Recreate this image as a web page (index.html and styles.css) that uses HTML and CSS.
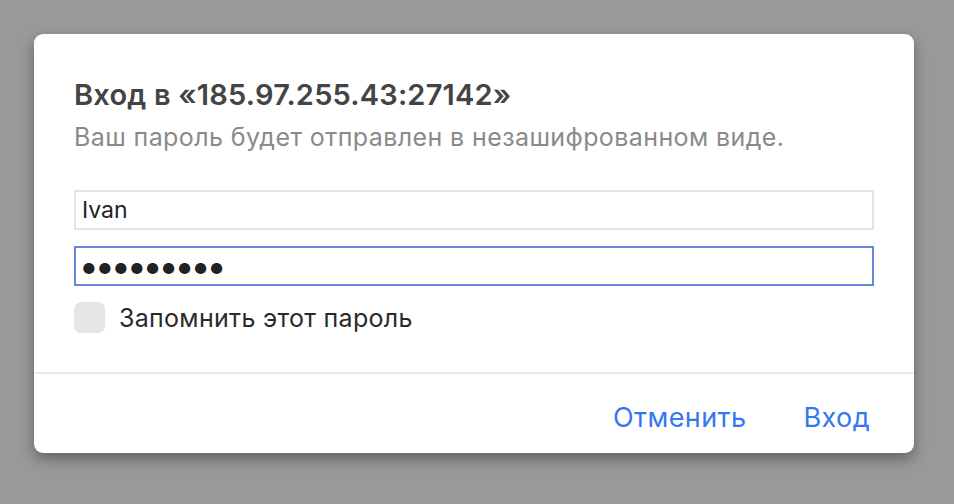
FILE: index.html
```html
<!DOCTYPE html>
<html lang="ru">
<head>
<meta charset="utf-8">
<link rel="stylesheet" href="styles.css">
</head>
<body>
<div class="dialog">
  <div class="content">
    <h1 class="title">Вход в «185.97.255.43:27142»</h1>
    <p class="subtitle">Ваш пароль будет отправлен в незашифрованном виде.</p>
    <div class="field">Ivan</div>
    <div class="field focused"><span class="dots">●●●●●●●●●</span></div>
    <label class="remember"><span class="checkbox"></span><span class="remember-text">Запомнить этот пароль</span></label>
  </div>
  <div class="footer">
    <span class="btn">Отменить</span>
    <span class="btn">Вход</span>
  </div>
</div>
</body>
</html>
```

FILE: styles.css
```css
html, body {
  margin: 0;
  padding: 0;
}
body {
  width: 954px;
  height: 504px;
  background: #999999;
  font-family: Inter, "Liberation Sans", sans-serif;
  overflow: hidden;
}
.dialog {
  margin: 34px 0 0 34px;
  width: 880px;
  height: 419px;
  background: #ffffff;
  border-radius: 9px;
  box-shadow: 0 6px 14px rgba(0, 0, 0, 0.35);
  display: flex;
  flex-direction: column;
}
.content {
  padding: 44px 40px 39px 40px;
  display: flex;
  flex-direction: column;
  border-bottom: 2px solid #ebebeb;
}
.title {
  margin: 0;
  font-size: 29px;
  line-height: 34px;
  font-weight: 600;
  letter-spacing: 0.2px;
  color: #444444;
}
.subtitle {
  margin: 10px 0 0 0;
  font-size: 25px;
  line-height: 30px;
  letter-spacing: 0.4px;
  color: #8a8a8a;
}
.field {
  margin-top: 38px;
  height: 40px;
  box-sizing: border-box;
  border: 2px solid #e2e2e2;
  padding: 0 6px;
  font-size: 23px;
  line-height: 36px;
  color: #222222;
}
.field.focused {
  margin-top: 16px;
  border-color: #6389dc;
}
.dots {
  font-size: 15px;
  letter-spacing: 2.25px;
  color: #222;
}
.remember {
  margin-top: 16px;
  display: flex;
  align-items: center;
  gap: 14px;
}
.checkbox {
  width: 31px;
  height: 31px;
  border-radius: 7px;
  background: #e6e6e6;
}
.remember-text {
  font-size: 25px;
  letter-spacing: 0.3px;
  color: #2a2a2a;
}
.footer {
  flex: 1;
  display: flex;
  justify-content: flex-end;
  align-items: center;
  gap: 57px;
  padding: 8px 44px 0 0;
}
.btn {
  font-size: 27px;
  letter-spacing: 0.4px;
  color: #3478f0;
}
```
